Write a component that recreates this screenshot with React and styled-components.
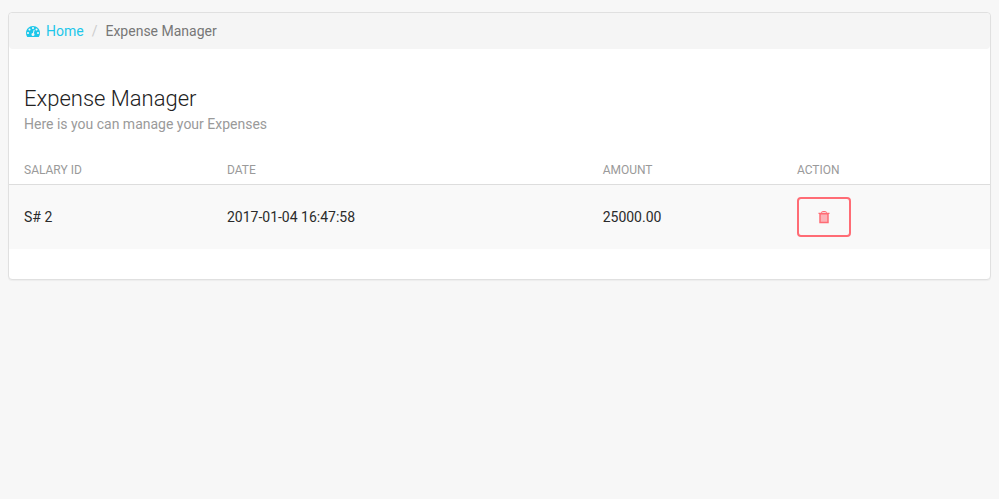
import React from "react";
import styled, { createGlobalStyle } from "styled-components";

const GlobalStyle = createGlobalStyle`
  * { box-sizing: border-box; }
  body {
    margin: 0;
    background: #f7f7f7;
    color: #2b2b2b;
    font-family: Roboto, "Helvetica Neue", Arial, sans-serif;
    font-size: 14px;
    line-height: 20px;
  }
`;

const Page = styled.main`
  padding: 12px 8px;
`;

const Card = styled.section`
  background: #fff;
  border: 1px solid #e0e0e0;
  border-radius: 4px;
  box-shadow: 0 1px 1px rgba(0, 0, 0, 0.04);
  padding-bottom: 30px;
  overflow: hidden;
`;

const Breadcrumb = styled.nav`
  background: #f5f5f5;
  border-radius: 4px;
  padding: 8px 17px;
`;

const Crumbs = styled.ol`
  display: flex;
  align-items: center;
  list-style: none;
  margin: 0;
  padding: 0;
`;

const Crumb = styled.li`
  color: #777;

  & + &::before {
    content: "/";
    color: #ccc;
    padding: 0 8px;
  }
`;

const HomeLink = styled.a`
  display: flex;
  align-items: center;
  gap: 6px;
  color: #1dc7ea;
  text-decoration: none;
`;

const Header = styled.header`
  padding: 35px 15px 0;
`;

const Title = styled.h1`
  margin: 0;
  font-size: 22px;
  font-weight: 300;
  line-height: 30px;
  color: #222;
`;

const Subtitle = styled.p`
  margin: 0;
  color: #9a9a9a;
`;

const Table = styled.table`
  width: 100%;
  margin-top: 20px;
  border-collapse: collapse;
`;

const HeadCell = styled.th`
  width: ${({ $width }) => $width};
  padding: 6px 8px 4px;
  border-bottom: 1px solid #ddd;
  color: #9a9a9a;
  font-size: 12px;
  font-weight: 400;
  text-align: left;
  text-transform: uppercase;

  &:first-child { padding-left: 15px; }
`;

const Cell = styled.td`
  padding: 12px 8px;
  background: #f9f9f9;

  &:first-child { padding-left: 15px; }
`;

const DeleteButton = styled.button`
  display: flex;
  align-items: center;
  justify-content: center;
  width: 54px;
  height: 40px;
  padding: 0;
  border: 2px solid #ff6c75;
  border-radius: 4px;
  background: transparent;
  color: #ff6c75;
  cursor: pointer;
`;

const columns = [
  { label: "Salary ID", width: "21.4%" },
  { label: "Date", width: "38.3%" },
  { label: "Amount", width: "19.8%" },
  { label: "Action", width: "20.5%" },
];

const rows = [{ id: "S# 2", date: "2017-01-04 16:47:58", amount: "25000.00" }];

function DashboardIcon() {
  return (
    <svg width="14" height="14" viewBox="0 0 1792 1792" fill="currentColor" aria-hidden="true">
      <path d="M384 1152q0-53-37.5-90.5t-90.5-37.5-90.5 37.5-37.5 90.5 37.5 90.5 90.5 37.5 90.5-37.5 37.5-90.5zm192-448q0-53-37.5-90.5t-90.5-37.5-90.5 37.5-37.5 90.5 37.5 90.5 90.5 37.5 90.5-37.5 37.5-90.5zm428 481l101-382q6-26-7.5-48.5t-38.5-29.5-48 6.5-30 39.5l-101 382q-60 5-107 43.5t-63 98.5q-20 77 20 146t117 89 146-20 89-117q16-60-6-117t-72-91zm660-33q0-53-37.5-90.5t-90.5-37.5-90.5 37.5-37.5 90.5 37.5 90.5 90.5 37.5 90.5-37.5 37.5-90.5zm-640-640q0-53-37.5-90.5t-90.5-37.5-90.5 37.5-37.5 90.5 37.5 90.5 90.5 37.5 90.5-37.5 37.5-90.5zm448 192q0-53-37.5-90.5t-90.5-37.5-90.5 37.5-37.5 90.5 37.5 90.5 90.5 37.5 90.5-37.5 37.5-90.5zm320 448q0 261-141 483-19 29-54 29h-1402q-35 0-54-29-141-221-141-483 0-182 71-348t191-286 286-191 348-71 348 71 286 191 191 286 71 348z" />
    </svg>
  );
}

function TrashIcon() {
  return (
    <svg width="12" height="14" viewBox="0 0 12 14" fill="none" stroke="currentColor" aria-hidden="true">
      <path d="M.5 3.4h11" strokeWidth="1.2" />
      <path d="M3.7 3V2.2q0-.7.8-.7h3q.8 0 .8.7V3" />
      <path d="M2 3.8h8v8.6H2z" fill="currentColor" fillOpacity="0.5" strokeWidth="1.5" />
    </svg>
  );
}

export default function App() {
  return (
    <>
      <GlobalStyle />
      <Page>
        <Card>
          <Breadcrumb aria-label="Breadcrumb">
            <Crumbs>
              <Crumb>
                <HomeLink href="#">
                  <DashboardIcon />
                  Home
                </HomeLink>
              </Crumb>
              <Crumb aria-current="page">Expense Manager</Crumb>
            </Crumbs>
          </Breadcrumb>
          <Header>
            <Title>Expense Manager</Title>
            <Subtitle>Here is you can manage your Expenses</Subtitle>
          </Header>
          <Table>
            <thead>
              <tr>
                {columns.map((column) => (
                  <HeadCell key={column.label} scope="col" $width={column.width}>
                    {column.label}
                  </HeadCell>
                ))}
              </tr>
            </thead>
            <tbody>
              {rows.map((row) => (
                <tr key={row.id}>
                  <Cell>{row.id}</Cell>
                  <Cell>{row.date}</Cell>
                  <Cell>{row.amount}</Cell>
                  <Cell>
                    <DeleteButton type="button" aria-label="Delete">
                      <TrashIcon />
                    </DeleteButton>
                  </Cell>
                </tr>
              ))}
            </tbody>
          </Table>
        </Card>
      </Page>
    </>
  );
}
